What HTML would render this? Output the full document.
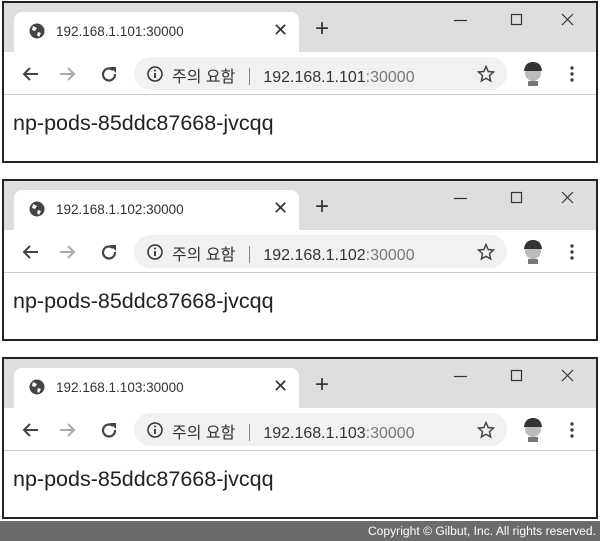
<!DOCTYPE html>
<html><head><meta charset="utf-8"><style>
*{margin:0;padding:0;box-sizing:border-box}
body{width:600px;height:541px;background:#fff;position:relative;overflow:hidden;font-family:"Liberation Sans","Noto Sans CJK KR",sans-serif}
.w{position:absolute;left:2px;width:596px;height:162px;border:2px solid #222;background:#fff;overflow:hidden}
.strip{position:absolute;left:0;top:0;width:100%;height:49px;background:#dedede}
.tab{position:absolute;left:10px;top:9px;width:285px;height:40px;background:#fff;border-radius:8px 8px 0 0}
.tt{position:absolute;left:42px;top:12px;font-size:13.5px;color:#333}
.tx{position:absolute;left:259px;top:8px;font-size:18px;color:#333}
.plus{position:absolute;left:311px;top:14px;font-size:24px;color:#333;line-height:24px}
.tb{position:absolute;left:0;top:49px;width:100%;height:43px;background:#fff;border-bottom:1px solid #ccc}
.omni{position:absolute;left:130px;top:5px;width:373px;height:33px;background:#f1f1f1;border-radius:17px}
.ot{position:absolute;left:38px;top:6px;font-size:16px;color:#333;white-space:nowrap}
.sep{display:inline-block;width:1px;height:17px;background:#888;margin:0 13px 0 14px;vertical-align:-3px}
.content{position:absolute;left:9px;top:108px;font-size:21.5px;color:#222}
svg{position:absolute}
.foot{position:absolute;left:0;top:521px;width:600px;height:20px;background:#6b6b6b;color:#fff;font-size:12.1px;text-align:right;padding:3px 4px 0 0}
</style></head><body>

<div class="w" style="top:1px">
 <div class="strip"></div>
 <div class="tab"><svg style="left:15px;top:11px" width="16" height="16" viewBox="0 0 16 16"><circle cx="8" cy="8" r="7.5" fill="#444"/><path d="M4 3 L8 5 L6 8 L3 7Z M9 9 L12 10 L10 14 L8 12Z" fill="#fff"/></svg><div class="tt">192.168.1.101:30000</div><div class="tx">✕</div></div>
 <div class="plus">+</div>
 <svg style="left:450px;top:10px" width="130" height="14" viewBox="0 0 130 14"><path d="M0 7.5H13" stroke="#333" stroke-width="1.2"/><rect x="57.5" y="1.5" width="10" height="10" fill="none" stroke="#333" stroke-width="1.2"/><path d="M108 1L119 12M119 1L108 12" stroke="#333" stroke-width="1.2"/></svg>
 <div class="tb">
  <svg style="left:18px;top:14px" width="100" height="16" viewBox="0 0 100 16"><path d="M16 8H2M8 2L2 8L8 14" fill="none" stroke="#444" stroke-width="2"/><path d="M38 8H52M46 2L52 8L46 14" fill="none" stroke="#aaa" stroke-width="2"/><path d="M91 4A6 6 0 1 0 93 8" fill="none" stroke="#444" stroke-width="2.2"/><path d="M88 1H94V7Z" fill="#444"/></svg>
  <div class="omni"><svg style="left:13px;top:9px" width="16" height="16" viewBox="0 0 16 16"><circle cx="8" cy="8" r="7" fill="none" stroke="#333" stroke-width="1.5"/><path d="M8 7V12" stroke="#333" stroke-width="1.8"/><circle cx="8" cy="4.5" r="1" fill="#333"/></svg><div class="ot">주의 요함<span class="sep"></span>192.168.1.101<span style="color:#777">:30000</span></div><svg style="left:343px;top:8px" width="18" height="18" viewBox="0 0 18 18"><path d="M9 1.5L11.2 6.5L16.5 7L12.5 10.6L13.6 16L9 13.2L4.4 16L5.5 10.6L1.5 7L6.8 6.5Z" fill="none" stroke="#444" stroke-width="1.5"/></svg></div>
  <svg style="left:518px;top:9px" width="22" height="26" viewBox="0 0 22 26"><circle cx="11" cy="12" r="8" fill="#bbb"/><path d="M2 10Q3 1 11 1Q19 1 20 10Z" fill="#333"/><rect x="6" y="20" width="10" height="5" fill="#777"/></svg>
  <svg style="left:565px;top:14px" width="6" height="16" viewBox="0 0 6 16"><circle cx="3" cy="2" r="1.7" fill="#444"/><circle cx="3" cy="8" r="1.7" fill="#444"/><circle cx="3" cy="14" r="1.7" fill="#444"/></svg>
 </div>
 <div class="content">np-pods-85ddc87668-jvcqq</div>
</div>

<div class="w" style="top:179px">
 <div class="strip"></div>
 <div class="tab"><svg style="left:15px;top:11px" width="16" height="16" viewBox="0 0 16 16"><circle cx="8" cy="8" r="7.5" fill="#444"/><path d="M4 3 L8 5 L6 8 L3 7Z M9 9 L12 10 L10 14 L8 12Z" fill="#fff"/></svg><div class="tt">192.168.1.102:30000</div><div class="tx">✕</div></div>
 <div class="plus">+</div>
 <svg style="left:450px;top:10px" width="130" height="14" viewBox="0 0 130 14"><path d="M0 7.5H13" stroke="#333" stroke-width="1.2"/><rect x="57.5" y="1.5" width="10" height="10" fill="none" stroke="#333" stroke-width="1.2"/><path d="M108 1L119 12M119 1L108 12" stroke="#333" stroke-width="1.2"/></svg>
 <div class="tb">
  <svg style="left:18px;top:14px" width="100" height="16" viewBox="0 0 100 16"><path d="M16 8H2M8 2L2 8L8 14" fill="none" stroke="#444" stroke-width="2"/><path d="M38 8H52M46 2L52 8L46 14" fill="none" stroke="#aaa" stroke-width="2"/><path d="M91 4A6 6 0 1 0 93 8" fill="none" stroke="#444" stroke-width="2.2"/><path d="M88 1H94V7Z" fill="#444"/></svg>
  <div class="omni"><svg style="left:13px;top:9px" width="16" height="16" viewBox="0 0 16 16"><circle cx="8" cy="8" r="7" fill="none" stroke="#333" stroke-width="1.5"/><path d="M8 7V12" stroke="#333" stroke-width="1.8"/><circle cx="8" cy="4.5" r="1" fill="#333"/></svg><div class="ot">주의 요함<span class="sep"></span>192.168.1.102<span style="color:#777">:30000</span></div><svg style="left:343px;top:8px" width="18" height="18" viewBox="0 0 18 18"><path d="M9 1.5L11.2 6.5L16.5 7L12.5 10.6L13.6 16L9 13.2L4.4 16L5.5 10.6L1.5 7L6.8 6.5Z" fill="none" stroke="#444" stroke-width="1.5"/></svg></div>
  <svg style="left:518px;top:9px" width="22" height="26" viewBox="0 0 22 26"><circle cx="11" cy="12" r="8" fill="#bbb"/><path d="M2 10Q3 1 11 1Q19 1 20 10Z" fill="#333"/><rect x="6" y="20" width="10" height="5" fill="#777"/></svg>
  <svg style="left:565px;top:14px" width="6" height="16" viewBox="0 0 6 16"><circle cx="3" cy="2" r="1.7" fill="#444"/><circle cx="3" cy="8" r="1.7" fill="#444"/><circle cx="3" cy="14" r="1.7" fill="#444"/></svg>
 </div>
 <div class="content">np-pods-85ddc87668-jvcqq</div>
</div>

<div class="w" style="top:357px">
 <div class="strip"></div>
 <div class="tab"><svg style="left:15px;top:11px" width="16" height="16" viewBox="0 0 16 16"><circle cx="8" cy="8" r="7.5" fill="#444"/><path d="M4 3 L8 5 L6 8 L3 7Z M9 9 L12 10 L10 14 L8 12Z" fill="#fff"/></svg><div class="tt">192.168.1.103:30000</div><div class="tx">✕</div></div>
 <div class="plus">+</div>
 <svg style="left:450px;top:10px" width="130" height="14" viewBox="0 0 130 14"><path d="M0 7.5H13" stroke="#333" stroke-width="1.2"/><rect x="57.5" y="1.5" width="10" height="10" fill="none" stroke="#333" stroke-width="1.2"/><path d="M108 1L119 12M119 1L108 12" stroke="#333" stroke-width="1.2"/></svg>
 <div class="tb">
  <svg style="left:18px;top:14px" width="100" height="16" viewBox="0 0 100 16"><path d="M16 8H2M8 2L2 8L8 14" fill="none" stroke="#444" stroke-width="2"/><path d="M38 8H52M46 2L52 8L46 14" fill="none" stroke="#aaa" stroke-width="2"/><path d="M91 4A6 6 0 1 0 93 8" fill="none" stroke="#444" stroke-width="2.2"/><path d="M88 1H94V7Z" fill="#444"/></svg>
  <div class="omni"><svg style="left:13px;top:9px" width="16" height="16" viewBox="0 0 16 16"><circle cx="8" cy="8" r="7" fill="none" stroke="#333" stroke-width="1.5"/><path d="M8 7V12" stroke="#333" stroke-width="1.8"/><circle cx="8" cy="4.5" r="1" fill="#333"/></svg><div class="ot">주의 요함<span class="sep"></span>192.168.1.103<span style="color:#777">:30000</span></div><svg style="left:343px;top:8px" width="18" height="18" viewBox="0 0 18 18"><path d="M9 1.5L11.2 6.5L16.5 7L12.5 10.6L13.6 16L9 13.2L4.4 16L5.5 10.6L1.5 7L6.8 6.5Z" fill="none" stroke="#444" stroke-width="1.5"/></svg></div>
  <svg style="left:518px;top:9px" width="22" height="26" viewBox="0 0 22 26"><circle cx="11" cy="12" r="8" fill="#bbb"/><path d="M2 10Q3 1 11 1Q19 1 20 10Z" fill="#333"/><rect x="6" y="20" width="10" height="5" fill="#777"/></svg>
  <svg style="left:565px;top:14px" width="6" height="16" viewBox="0 0 6 16"><circle cx="3" cy="2" r="1.7" fill="#444"/><circle cx="3" cy="8" r="1.7" fill="#444"/><circle cx="3" cy="14" r="1.7" fill="#444"/></svg>
 </div>
 <div class="content">np-pods-85ddc87668-jvcqq</div>
</div>

<div class="foot">Copyright © Gilbut, Inc. All rights reserved.</div>
</body></html>
